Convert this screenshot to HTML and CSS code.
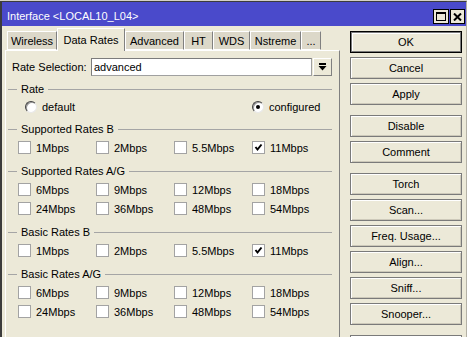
FILE: index.html
```html
<!DOCTYPE html>
<html lang="en">
<head>
    <meta charset="UTF-8">
    <meta name="viewport" content="width=device-width, initial-scale=1.0">
    <title>Interface &lt;LOCAL10_L04&gt;</title>
    <link rel="stylesheet" href="styles.css">
</head>
<body>
    <div class="window">
        <div class="title-bar">
            <span class="title-text">Interface &lt;LOCAL10_L04&gt;</span>
            <div class="title-buttons">
                <span class="title-btn">
                    <svg width="10" height="9" viewBox="0 0 10 9"><rect x="0.5" y="0.5" width="9" height="8" fill="none" stroke="#000"/><rect x="0" y="0" width="10" height="2" fill="#000"/></svg>
                </span>
                <span class="title-btn">
                    <svg width="9" height="8" viewBox="0 0 9 8"><path d="M1 0.5 L8 7.5 M8 0.5 L1 7.5" stroke="#000" stroke-width="2"/></svg>
                </span>
            </div>
        </div>

        <div class="window-body">
            <div class="tabs-area">
                <div class="tabs">
                    <div class="tab" style="width: 50px">Wireless</div>
                    <div class="tab active" style="width: 68px">Data Rates</div>
                    <div class="tab" style="width: 59px">Advanced</div>
                    <div class="tab" style="width: 29px">HT</div>
                    <div class="tab" style="width: 37px">WDS</div>
                    <div class="tab" style="width: 51px">Nstreme</div>
                    <div class="tab" style="width: 20px">...</div>
                </div>

                <div class="panel">
                    <div class="field-row">
                        <span class="field-label">Rate Selection:</span>
                        <div class="select-box">advanced</div>
                        <div class="select-btn">
                            <svg width="9" height="8" viewBox="0 0 9 8"><rect x="1" y="0" width="7" height="2" fill="#000"/><polygon points="0.5,3 8.5,3 4.5,7.5" fill="#000"/></svg>
                        </div>
                    </div>

                    <div class="group">
                        <div class="group-header"><span>Rate</span></div>
                        <div class="radio-row">
                            <div class="radio-item first">
                                <span class="radio"></span>
                                <span>default</span>
                            </div>
                            <div class="radio-item">
                                <span class="radio checked"></span>
                                <span>configured</span>
                            </div>
                        </div>
                    </div>

                    <div class="group">
                        <div class="group-header"><span>Supported Rates B</span></div>
                        <div class="check-grid">
                            <div class="check-item"><span class="checkbox"></span>1Mbps</div>
                            <div class="check-item"><span class="checkbox"></span>2Mbps</div>
                            <div class="check-item"><span class="checkbox"></span>5.5Mbps</div>
                            <div class="check-item"><span class="checkbox checked"><svg width="11" height="11" viewBox="0 0 11 11"><polyline points="2.5,5 4.5,7.5 8.5,2.5" fill="none" stroke="#000" stroke-width="2"/></svg></span>11Mbps</div>
                        </div>
                    </div>

                    <div class="group">
                        <div class="group-header"><span>Supported Rates A/G</span></div>
                        <div class="check-grid">
                            <div class="check-item"><span class="checkbox"></span>6Mbps</div>
                            <div class="check-item"><span class="checkbox"></span>9Mbps</div>
                            <div class="check-item"><span class="checkbox"></span>12Mbps</div>
                            <div class="check-item"><span class="checkbox"></span>18Mbps</div>
                            <div class="check-item"><span class="checkbox"></span>24Mbps</div>
                            <div class="check-item"><span class="checkbox"></span>36Mbps</div>
                            <div class="check-item"><span class="checkbox"></span>48Mbps</div>
                            <div class="check-item"><span class="checkbox"></span>54Mbps</div>
                        </div>
                    </div>

                    <div class="group">
                        <div class="group-header"><span>Basic Rates B</span></div>
                        <div class="check-grid">
                            <div class="check-item"><span class="checkbox"></span>1Mbps</div>
                            <div class="check-item"><span class="checkbox"></span>2Mbps</div>
                            <div class="check-item"><span class="checkbox"></span>5.5Mbps</div>
                            <div class="check-item"><span class="checkbox checked"><svg width="11" height="11" viewBox="0 0 11 11"><polyline points="2.5,5 4.5,7.5 8.5,2.5" fill="none" stroke="#000" stroke-width="2"/></svg></span>11Mbps</div>
                        </div>
                    </div>

                    <div class="group">
                        <div class="group-header"><span>Basic Rates A/G</span></div>
                        <div class="check-grid">
                            <div class="check-item"><span class="checkbox"></span>6Mbps</div>
                            <div class="check-item"><span class="checkbox"></span>9Mbps</div>
                            <div class="check-item"><span class="checkbox"></span>12Mbps</div>
                            <div class="check-item"><span class="checkbox"></span>18Mbps</div>
                            <div class="check-item"><span class="checkbox"></span>24Mbps</div>
                            <div class="check-item"><span class="checkbox"></span>36Mbps</div>
                            <div class="check-item"><span class="checkbox"></span>48Mbps</div>
                            <div class="check-item"><span class="checkbox"></span>54Mbps</div>
                        </div>
                    </div>
                </div>
            </div>

            <div class="side-buttons">
                <div class="btn-group">
                    <button class="btn default">OK</button>
                    <button class="btn">Cancel</button>
                    <button class="btn">Apply</button>
                </div>
                <div class="btn-group">
                    <button class="btn">Disable</button>
                    <button class="btn">Comment</button>
                </div>
                <div class="btn-group">
                    <button class="btn">Torch</button>
                    <button class="btn">Scan...</button>
                    <button class="btn">Freq. Usage...</button>
                    <button class="btn">Align...</button>
                    <button class="btn">Sniff...</button>
                    <button class="btn">Snooper...</button>
                </div>
                <div class="btn-group">
                    <button class="btn"></button>
                </div>
            </div>
        </div>
    </div>
</body>
</html>
```

FILE: styles.css
```css
:root {
    --face: #ece9d8;
    --tab-face: #dcd8c9;
    --title-blue: #4a4acb;
    --shadow: #808080;
    --line: #a5a5a5;
}

* {
    box-sizing: border-box;
    margin: 0;
    padding: 0;
}

body {
    background-color: #d4d0c8;
    font-family: 'Liberation Sans', Arial, sans-serif;
    font-size: 11px;
    color: #000;
    overflow: hidden;
}

.window {
    margin-top: 1px;
    height: 336px;
    background-color: var(--face);
    border-top: 1px solid #3c3c3c;
    border-left: 2px solid #3c3c3c;
    border-right: 1px solid #b4b1a5;
    display: flex;
    flex-direction: column;
    overflow: hidden;
}

/* title bar */
.title-bar {
    height: 24px;
    flex-shrink: 0;
    background-color: var(--title-blue);
    color: #fff;
    display: flex;
    align-items: center;
    justify-content: space-between;
    padding: 3px 1px 0 5px;
    font-size: 11px;
}

.title-buttons {
    display: flex;
    gap: 1px;
    margin-top: 2px;
}

.title-btn {
    width: 16px;
    height: 15px;
    background-color: var(--face);
    border: 1px solid #000;
    display: flex;
    align-items: center;
    justify-content: center;
}

.title-btn + .title-btn {
    width: 15px;
}

/* body */
.window-body {
    flex: 1;
    display: flex;
    min-height: 0;
}

.tabs-area {
    width: 335px;
    margin-left: 3px;
    display: flex;
    flex-direction: column;
}

.tabs {
    height: 24px;
    flex-shrink: 0;
    display: flex;
    align-items: flex-end;
    padding-left: 2px;
    position: relative;
    z-index: 1;
}

.tab {
    height: 19px;
    background-color: var(--tab-face);
    border-top: 1px solid #fff;
    border-left: 1px solid #fff;
    border-right: 1px solid var(--shadow);
    border-bottom: 1px solid #fff;
    display: flex;
    align-items: center;
    justify-content: center;
    white-space: nowrap;
    padding-top: 1px;
}

.tab.active {
    height: 23px;
    margin-bottom: -1px;
    background-color: var(--face);
    border-bottom: none;
    padding-bottom: 2px;
}

.panel {
    flex: 1;
    border-top: 1px solid #fff;
    border-left: 1px solid #fff;
    border-right: 1px solid var(--shadow);
    padding: 7px 6px 0 6px;
    overflow: hidden;
}

/* rate selection */
.field-row {
    display: flex;
    height: 18px;
    margin-right: 1px;
}

.field-label {
    width: 79px;
    display: flex;
    align-items: center;
}

.select-box {
    flex: 1;
    background-color: #fff;
    border: 1px solid #a0a0a0;
    border-top-color: #7c7c7c;
    border-left-color: #7c7c7c;
    padding-left: 2px;
    display: flex;
    align-items: center;
    margin-right: 1px;
}

.select-btn {
    width: 19px;
    border-top: 1px solid #fff;
    border-left: 1px solid #fff;
    border-right: 1px solid var(--shadow);
    border-bottom: 1px solid var(--shadow);
    display: flex;
    align-items: center;
    justify-content: center;
}

/* groups */
.group {
    margin-top: 5px;
}

.field-row + .group {
    margin-top: 4px;
}

.group-header {
    height: 18px;
    display: flex;
    align-items: center;
    margin: 0 1px 0 -4px;
}

.group-header::before {
    content: '';
    width: 9px;
    border-top: 1px solid var(--line);
}

.group-header span {
    margin: 0 4px;
}

.group-header::after {
    content: '';
    flex: 1;
    border-top: 1px solid var(--line);
}

.radio-row {
    height: 17px;
    display: flex;
    align-items: center;
    padding-left: 13px;
}

.radio-item {
    display: flex;
    align-items: center;
    gap: 5px;
}

.radio-item.first {
    width: 227px;
}

.radio {
    width: 12px;
    height: 12px;
    border-radius: 50%;
    background-color: #fff;
    border: 1px solid;
    border-color: #404040 #e8e8e8 #e8e8e8 #404040;
    box-shadow: inset 1px 1px 0 #9a9a9a;
    position: relative;
}

.radio.checked::after {
    content: '';
    position: absolute;
    left: 3px;
    top: 3px;
    width: 4px;
    height: 4px;
    border-radius: 50%;
    background-color: #000;
}

.check-grid {
    display: grid;
    grid-template-columns: repeat(4, 78px);
    grid-auto-rows: 19px;
    padding-left: 6px;
}

.check-item {
    display: flex;
    align-items: center;
    gap: 5px;
}

.checkbox {
    width: 13px;
    height: 13px;
    background-color: #fff;
    border: 1px solid #a3a3a3;
    display: flex;
    align-items: center;
    justify-content: center;
}

/* side buttons */
.side-buttons {
    width: 112px;
    margin-left: 10px;
    padding-top: 5px;
}

.btn-group {
    display: flex;
    flex-direction: column;
    gap: 4px;
    margin-bottom: 10px;
}

.btn {
    height: 22px;
    background-color: var(--face);
    border: 1px solid #7a7a7a;
    box-shadow: inset 1px 1px 0 #fff, inset -1px -1px 0 #cdc9ba;
    font-family: inherit;
    font-size: 11px;
    color: #000;
    text-align: center;
}

.btn.default {
    border-color: #000;
    box-shadow: inset 0 0 0 1px #7a7a7a, inset 2px 2px 0 #fff;
}
```
